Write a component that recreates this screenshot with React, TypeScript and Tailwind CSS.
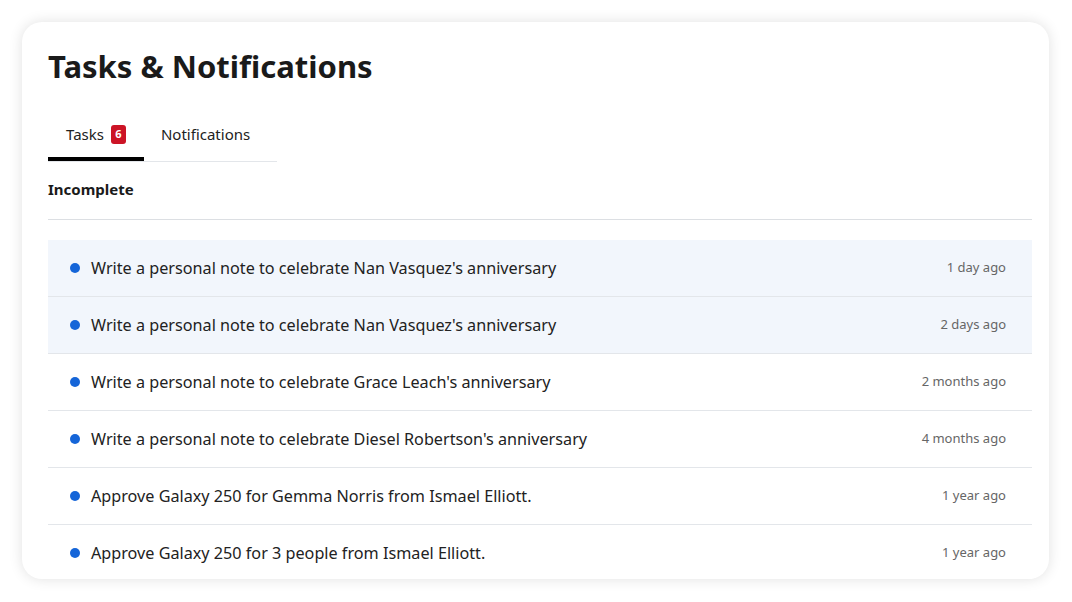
import React from "react";

type Task = {
  text: string;
  time: string;
  unread: boolean;
};

const tasks: Task[] = [
  { text: "Write a personal note to celebrate Nan Vasquez's anniversary", time: "1 day ago", unread: true },
  { text: "Write a personal note to celebrate Nan Vasquez's anniversary", time: "2 days ago", unread: true },
  { text: "Write a personal note to celebrate Grace Leach's anniversary", time: "2 months ago", unread: false },
  { text: "Write a personal note to celebrate Diesel Robertson's anniversary", time: "4 months ago", unread: false },
  { text: "Approve Galaxy 250 for Gemma Norris from Ismael Elliott.", time: "1 year ago", unread: false },
  { text: "Approve Galaxy 250 for 3 people from Ismael Elliott.", time: "1 year ago", unread: false },
];

function TaskRow({ task }: { task: Task }) {
  return (
    <div
      className={
        "flex h-[57px] items-center border-b border-[#e3e6ea] pl-[22px] pr-[26px] " +
        (task.unread ? "bg-[#f2f6fc]" : "bg-white")
      }
    >
      <span className="mr-[11px] h-[10px] w-[10px] shrink-0 rounded-full bg-[#1565d8]" />
      <span className="flex-1 text-[16.2px] text-[#222]">{task.text}</span>
      <span className="text-[13px] text-[#666]">{task.time}</span>
    </div>
  );
}

export default function App() {
  return (
    <div
      className="h-[602px] w-[1072px] overflow-hidden bg-white p-[22px]"
      style={{ fontFamily: '"Noto Sans", "Open Sans", sans-serif' }}
    >
      <div className="h-[557px] w-[1027px] overflow-hidden rounded-[20px] bg-white pl-[26px] pr-[17px] pt-[23px] shadow-[0_0_14px_rgba(0,0,0,0.12)]">
        <h1 className="text-[31px] font-bold leading-[42px] text-[#1a1a1a]">
          Tasks &amp; Notifications
        </h1>

        <div className="mt-[21px] flex w-[229px] border-b border-[#e3e6ea]">
          <div className="mb-[-1px] flex h-[53px] items-center gap-[7px] border-b-[4px] border-black pl-[18px] pr-[18px] pt-[4px]">
            <span className="text-[15px] text-[#222]">Tasks</span>
            <span className="flex h-[19px] w-[15px] items-center justify-center rounded-[3px] bg-[#cc1426] text-[11px] font-bold text-white">
              6
            </span>
          </div>
          <div className="flex h-[53px] items-center px-[17px]">
            <span className="text-[15px] text-[#222]">Notifications</span>
          </div>
        </div>

        <div className="flex h-[58px] items-center border-b border-[#dcdfe3] pb-[2px] text-[15px] font-bold text-[#1a1a1a]">
          Incomplete
        </div>

        <div className="mt-[20px]">
          {tasks.map((t, i) => (
            <TaskRow key={i} task={t} />
          ))}
        </div>
      </div>
    </div>
  );
}
